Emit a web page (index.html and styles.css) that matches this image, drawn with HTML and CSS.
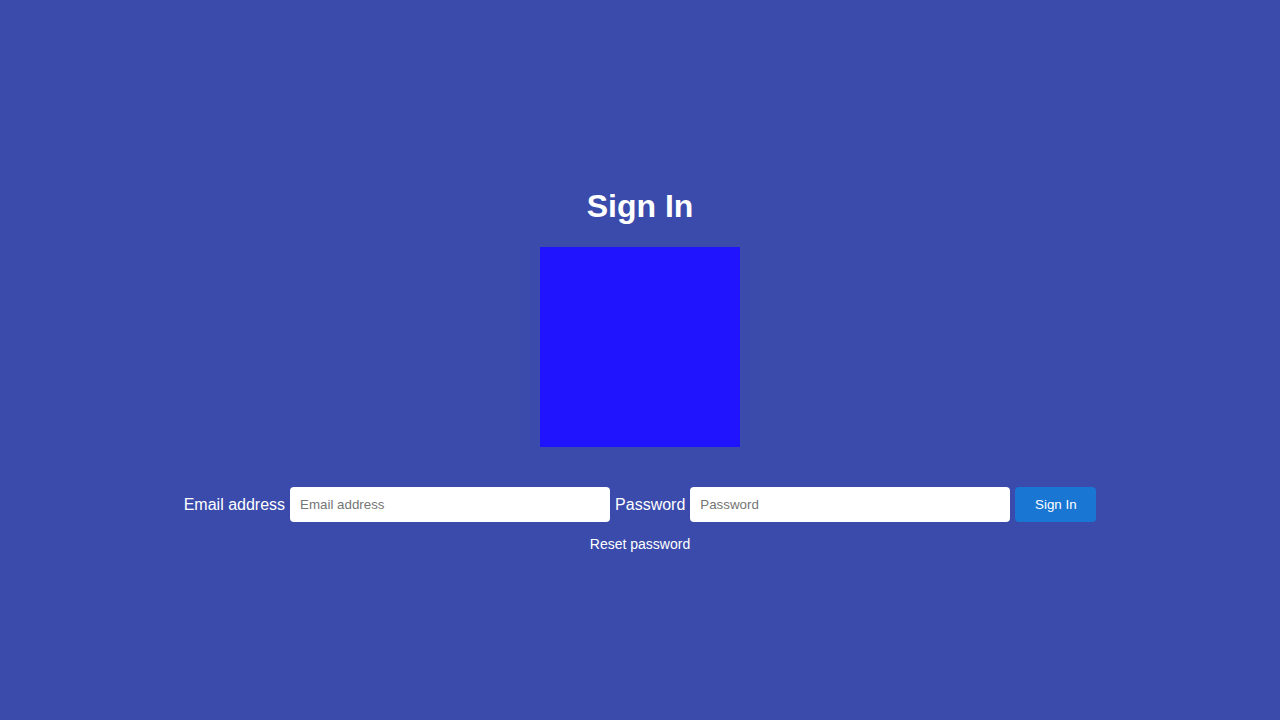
FILE: index.html
```html
<!DOCTYPE html>
<html>
<head>
<meta charset="utf-8">
<link rel="stylesheet" href="styles.css">
</head>
<body>
<main class="page">
  <h1 class="title">Sign In</h1>
  <div class="logo"></div>
  <form class="form">
    <label class="label" for="email">Email address</label>
    <input class="field" id="email" type="email" placeholder="Email address">
    <label class="label" for="pw">Password</label>
    <input class="field" id="pw" type="password" placeholder="Password">
    <button class="btn" type="button">Sign In</button>
  </form>
  <a class="reset" href="#">Reset password</a>
</main>
</body>
</html>
```
FILE: styles.css
```css
html, body {
  margin: 0;
  height: 100%;
}
body {
  background: #3a4bab;
  font-family: "Liberation Sans", Arial, sans-serif;
  color: #fff;
}
.page {
  display: flex;
  flex-direction: column;
  align-items: center;
  padding-top: 188px;
}
.title {
  margin: 0;
  font-size: 32px;
  font-weight: bold;
  line-height: 37px;
}
.logo {
  width: 200px;
  height: 200px;
  background: #2014ff;
  margin-top: 22px;
}
.form {
  display: flex;
  align-items: center;
  gap: 5px;
  margin-top: 40px;
}
.label {
  font-size: 16px;
}
.field {
  width: 320px;
  height: 35px;
  box-sizing: border-box;
  border: none;
  border-radius: 4px;
  padding: 0 10px;
  font-family: "Liberation Sans", Arial, sans-serif;
  font-size: 13.333px;
  color: #333;
  background: #fff;
}
.field::placeholder {
  color: #757575;
}
.btn {
  width: 81px;
  height: 35px;
  border: none;
  border-radius: 4px;
  background: #1976d2;
  color: #fff;
  font-family: "Liberation Sans", Arial, sans-serif;
  font-size: 13.333px;
}
.reset {
  margin-top: 14px;
  color: #fff;
  font-size: 14px;
  text-decoration: none;
}
```
